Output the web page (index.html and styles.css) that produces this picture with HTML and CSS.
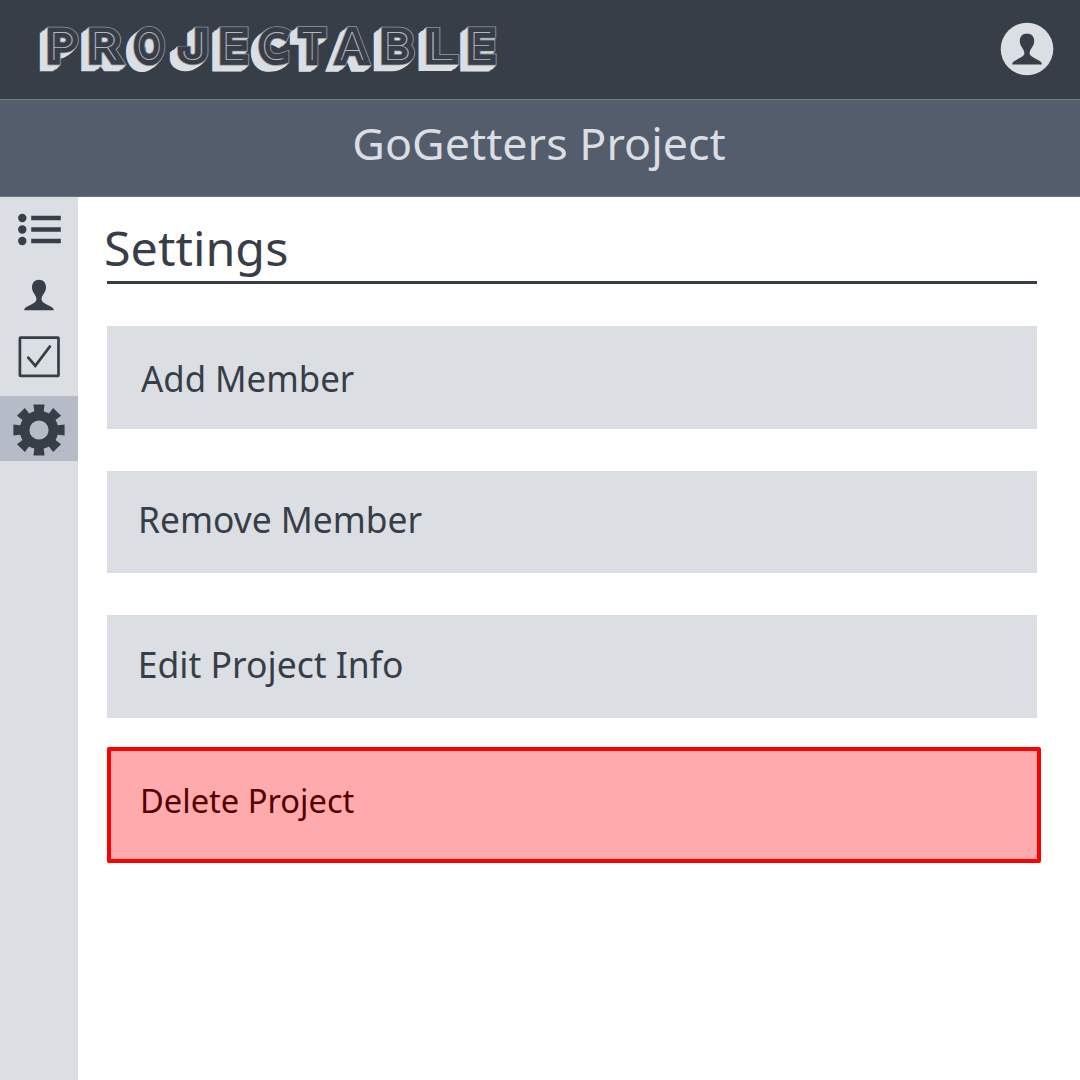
FILE: index.html
```html
<!DOCTYPE html>
<html lang="en">
<head>
<meta charset="utf-8">
<title>Projectable - Settings</title>
<link rel="stylesheet" href="styles.css">
</head>
<body>
<header class="topbar">
  <svg class="logo" width="470" height="60" viewBox="34 20 470 60" role="img" aria-label="Projectable">
    <defs>
      <g id="word" class="logo-word">
        <text transform="translate(48.200 60) scale(1.180 1)">P</text>
        <text transform="translate(89.500 60) scale(1.220 1)">R</text>
        <text transform="translate(136.200 60) scale(.9 1)">O</text>
        <text transform="translate(179.800 60) scale(1.250 1)">J</text>
        <text transform="translate(220.800 60) scale(1.120 1)">E</text>
        <text class="open" transform="translate(261.500 60) scale(1 1)">C</text>
        <text transform="translate(300.500 60) scale(.98 1)">T</text>
        <text transform="translate(339.500 60) scale(1.020 1)">A</text>
        <text transform="translate(382 60) scale(1.230 1)">B</text>
        <text transform="translate(426.500 60) scale(1.350 1)">L</text>
        <text transform="translate(468.800 60) scale(1.100 1)">E</text>
      </g>
    </defs>
    <use href="#word" class="logo-side" x="-7.200" y="6.300"/>
    <use href="#word" class="logo-side" x="-6" y="5.250"/>
    <use href="#word" class="logo-side" x="-5" y="4.400"/>
    <use href="#word" class="logo-side" x="-4" y="3.500"/>
    <use href="#word" class="logo-side" x="-3" y="2.600"/>
    <use href="#word" class="logo-side" x="-2" y="1.750"/>
    <use href="#word" class="logo-side" x="-1" y="0.900"/>
    <use href="#word" class="logo-edge"/>
    <use href="#word" class="logo-face"/>
    <use href="#word" class="logo-inline"/>
  </svg>
  <svg class="avatar" width="54" height="54" viewBox="0 0 54 54">
    <circle class="light" cx="27" cy="27" r="26.300"/>
    <path class="dark" d="M27 11.600c-4.400 0-7.200 3-7.200 7.500 0 6 4.600 7.500 4.600 12.400 0 4-12.100 6.700-12.100 10v.9h29.400v-.9c0-3.300-12.100-6-12.100-10 0-4.900 4.600-6.400 4.600-12.400 0-4.500-2.800-7.500-7.200-7.500z"/>
  </svg>
</header>
<div class="project-bar"><h1 class="project-name">GoGetters Project</h1></div>
<div class="body">
  <nav class="sidebar">
    <a class="nav-item nav-list"><svg width="44" height="34" viewBox="0 0 44 34">
      <g class="dark"><circle cx="4.300" cy="5" r="4.200"/><circle cx="4.300" cy="16.500" r="4.200"/><circle cx="4.300" cy="28" r="4.200"/>
      <path d="M13.200 2.700h29.600v4.600H13.200zM13.200 14.200h29.600v4.600H13.200zM13.200 25.700h29.600v4.600H13.200z"/></g></svg></a>
    <a class="nav-item nav-person"><svg width="30" height="32" viewBox="0 0 30 32">
      <path class="dark" d="M15 .8c-4.300 0-7 3-7 7.400 0 6 4.500 7.400 4.500 12.300 0 4.500-12.200 6.600-12.200 10v.7h29.400v-.7c0-3.400-12.200-5.500-12.200-10C17.500 15.600 22 14.200 22 8.200 22 3.800 19.300.8 15 .8z"/></svg></a>
    <a class="nav-item nav-task"><svg width="42" height="42" viewBox="0 0 42 42">
      <rect class="line" x="1.900" y="1.600" width="38.600" height="38.200" rx=".6"/>
      <path class="line" d="M9.200 21.400l1.300.4 6.800 8.100L32.500 9.600"/></svg></a>
    <a class="nav-item nav-gear"><svg width="52" height="52" viewBox="-26 -26 52 52">
      <defs><path id="tooth" d="M-5.600-25.600H5.600L4.200-15H-4.200z"/></defs>
      <g class="dark"><path fill-rule="evenodd" d="M0-19.300a19.300 19.300 0 1 1 0 38.600a19.300 19.300 0 1 1 0-38.600zM0-9.600a9.600 9.600 0 1 0 0 19.200a9.600 9.600 0 1 0 0-19.200z"/>
      <use href="#tooth"/><use href="#tooth" transform="rotate(45)"/><use href="#tooth" transform="rotate(90)"/><use href="#tooth" transform="rotate(135)"/><use href="#tooth" transform="rotate(180)"/><use href="#tooth" transform="rotate(225)"/><use href="#tooth" transform="rotate(270)"/><use href="#tooth" transform="rotate(315)"/></g></svg></a>
  </nav>
  <main class="content">
    <h2 class="heading"><span class="heading-text">Settings</span></h2>
    <div class="actions">
      <div class="action add"><span class="label">Add Member</span></div>
      <div class="action remove"><span class="label">Remove Member</span></div>
      <div class="action edit"><span class="label">Edit Project Info</span></div>
    </div>
    <div class="action danger"><span class="label">Delete Project</span></div>
  </main>
</div>
</body>
</html>
```
FILE: styles.css
```css
* { box-sizing: border-box; }
body {
  margin: 0;
  width: 1080px;
  height: 1080px;
  display: flex;
  flex-direction: column;
  overflow: hidden;
  background: #fff;
  color: #383e48;
  font-family: "Noto Sans", "Open Sans", sans-serif;
}
h1, h2 { margin: 0; font-weight: 400; }
svg { display: block; flex: none; }
.dark { fill: #383e48; }
.light { fill: #dbdee3; }
.line { fill: none; stroke: #383e48; stroke-width: 2.7; }

.topbar {
  height: 100px;
  flex: none;
  display: flex;
  justify-content: space-between;
  align-items: flex-start;
  padding: 20px 26.5px 0 34px;
  background: #383e48;
  border-bottom: 1px solid #737b86;
}
.avatar { margin-top: 2.4px; }
.logo-word text {
  font-family: "Inter", sans-serif;
  font-weight: 100;
  font-size: 38.5px;
  stroke-linejoin: miter;
  stroke-miterlimit: 2;
  vector-effect: non-scaling-stroke;
}
.logo-word .open { font-family: "Noto Sans", sans-serif; }
.logo-side { fill: #dbdee3; stroke: #dbdee3; stroke-width: 11.6px; }
.logo-edge { fill: #9298a1; stroke: #9298a1; stroke-width: 11.6px; }
.logo-face { fill: #383e48; stroke: #383e48; stroke-width: 10px; }
.logo-inline { fill: #b4b9c0; }

.project-bar {
  height: 97px;
  flex: none;
  text-align: center;
  background: #545d6b;
  border-bottom: 1px solid #6a7380;
}
.project-name {
  margin-left: -2px;
  color: #dbdee3;
  font-size: 44px;
  line-height: 87px;
  white-space: nowrap;
  transform: scaleX(1.019);
}

.body { flex: 1; display: flex; }
.sidebar { width: 78.3px; flex: none; background: #dbdee3; }
.nav-item { display: flex; justify-content: center; align-items: flex-start; }
.nav-list { height: 82px; padding: 16px 0 0 1px; }
.nav-person { height: 57px; }
.nav-task { height: 60px; }
.nav-gear { height: 65px; align-items: center; padding-top: 3px; background: #b5bcc7; }

.content { flex: 1; padding-left: 29px; }
.heading {
  width: 930px;
  height: 87px;
  border-bottom: 3px solid #383e48;
  font-size: 47.5px;
  line-height: 101px;
}
.heading-text, .label {
  display: inline-block;
  white-space: nowrap;
  transform-origin: 0 50%;
}
.heading-text { margin-left: -3px; transform: scaleX(1.02); }
.actions { display: grid; gap: 42px; margin-top: 42px; }
.action {
  width: 930px;
  height: 102.5px;
  padding-left: 30.5px;
  background: #dbdee3;
  font-size: 35.5px;
  line-height: 98px;
}
.add { padding-left: 34px; line-height: 104px; }
.add .label { transform: scaleX(.98); }
.remove { line-height: 96px; }
.remove .label { transform: scaleX(.996); }
.danger {
  width: 934px;
  height: 116px;
  margin-top: 29.5px;
  padding-left: 28.5px;
  border: 4px solid #f00;
  border-radius: 2px;
  background: #ffaaac;
  color: #500;
  font-size: 32px;
  line-height: 100px;
}
.danger .label { transform: scaleX(1.02); }
```
